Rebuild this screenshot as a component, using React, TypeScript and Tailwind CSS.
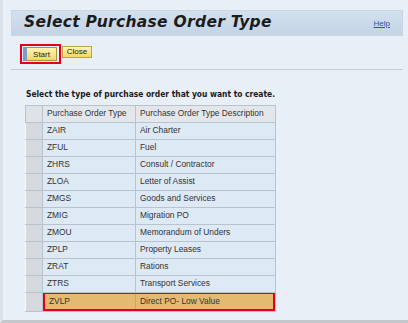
import React from "react";

const rows = [
  ["ZAIR", "Air Charter"],
  ["ZFUL", "Fuel"],
  ["ZHRS", "Consult / Contractor"],
  ["ZLOA", "Letter of Assist"],
  ["ZMGS", "Goods and Services"],
  ["ZMIG", "Migration PO"],
  ["ZMOU", "Memorandum of Unders"],
  ["ZPLP", "Property Leases"],
  ["ZRAT", "Rations"],
  ["ZTRS", "Transport Services"],
];

const App = () => {
  return (
    <div className="w-[408px] h-[323px] overflow-hidden bg-[#e9eff6] border-l-[3px] border-l-[#dde3ea] border-b-[3px] border-b-[#c4c8cc] font-['Liberation_Sans',Arial,sans-serif]">
      <div className="pt-[10px] pl-[8px] pr-[5px]">
        <div className="h-[26px] flex items-center justify-between px-[12px] bg-gradient-to-b from-[#d3e0ee] to-[#c3d4e6] border border-[#c9d6e3]">
          <h1 className="text-[15.5px] font-bold italic text-[#1c1c1c] font-['DejaVu_Sans',sans-serif] tracking-[0.3px]">
            Select Purchase Order Type
          </h1>
          <a className="text-[8px] text-[#2f4fa8] underline mt-[2px]">Help</a>
        </div>

        <div className="flex items-start pl-[9px] pt-[8px] h-[28px]">
          <div className="border-2 border-[#e3001b] p-[1px] pr-[2px] flex">
            <button className="h-[14px] w-[34px] text-[8px] text-[#222] bg-gradient-to-b from-[#fff4b0] to-[#f2d860] border border-[#a99640] border-l-[4px] border-l-[#7f9bc8] leading-none pt-[1px]">
              Start
            </button>
          </div>
          <button className="h-[12px] w-[30px] mt-[2px] ml-[1px] text-[8px] text-[#222] bg-gradient-to-b from-[#fff4b0] to-[#f2d860] border border-[#b8a44c] leading-none">
            Close
          </button>
        </div>

        <div className="h-px bg-[#c5ced8] mt-[5px]" />

        <p className="mt-[18px] ml-[15px] text-[8.4px] font-bold text-[#1a1a1a] font-['DejaVu_Sans_Condensed','DejaVu_Sans',sans-serif]">
          Select the type of purchase order that you want to create.
        </p>

        <table className="ml-[14px] mt-[4px] border-collapse text-[8.4px] text-[#333]">
          <thead>
            <tr className="h-[17px]">
              <th className="w-[17px] bg-[#dfe3e8] border border-[#b9c3cd]" />
              <th className="w-[93px] bg-[#e3e7ec] border border-[#b9c3cd] font-normal text-left pl-[4px]">
                Purchase Order Type
              </th>
              <th className="w-[140px] bg-[#e3e7ec] border border-[#b9c3cd] font-normal text-left pl-[4px]">
                Purchase Order Type Description
              </th>
            </tr>
          </thead>
          <tbody>
            {rows.map(([code, desc]) => (
              <tr key={code} className="h-[17px]">
                <td className="bg-[#d6d9dd] border border-[#b9c3cd] border-l-[#f4f6f8]" />
                <td className="bg-[#dde9f5] border border-[#b9c3cd] pl-[4px]">{code}</td>
                <td className="bg-[#dde9f5] border border-[#b9c3cd] pl-[4px]">{desc}</td>
              </tr>
            ))}
            <tr className="h-[18px]">
              <td className="bg-[#d6d9dd] border border-[#b9c3cd] border-l-[#f4f6f8]" />
              <td colSpan={2} className="p-0 border border-[#b9c3cd]">
                <div className="h-[19px] flex bg-[#e3bb70] border-2 border-[#e3001b] -mt-px">
                  <div className="w-[91px] pl-[4px] flex items-center border-r border-[#c8a866]">ZVLP</div>
                  <div className="flex-1 pl-[4px] flex items-center">Direct PO- Low Value</div>
                </div>
              </td>
            </tr>
          </tbody>
        </table>
      </div>
    </div>
  );
};

export default App;
